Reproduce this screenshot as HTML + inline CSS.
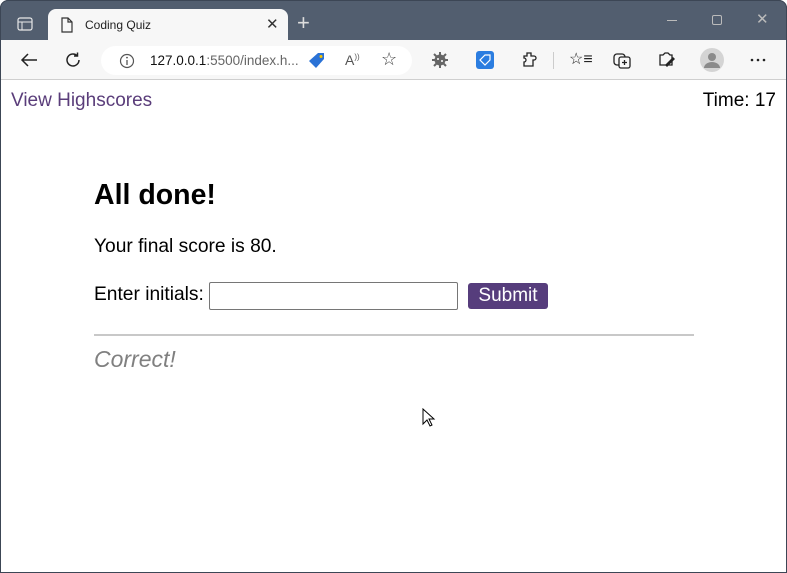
<!DOCTYPE html>
<html><head><meta charset="utf-8"><style>
*{margin:0;padding:0;box-sizing:border-box}
body{width:787px;height:573px;overflow:hidden;font-family:"Liberation Sans",Arial,sans-serif;background:#fff;position:relative}
.frame{position:absolute;inset:0;border:1px solid #3c4655;border-radius:8px 8px 0 0;pointer-events:none}
.title{position:absolute;left:0;top:0;width:787px;height:41px;background:#525e6f;border-radius:8px 8px 0 0}
.tab{position:absolute;left:48px;top:9px;width:240px;height:32px;background:#f7f7f7;border-radius:8px 8px 0 0;font-size:12px;color:#222}
.toolbar{position:absolute;left:0;top:40px;width:787px;height:40px;background:#f7f7f7;border-bottom:1px solid #cfcfcf}
.url{position:absolute;left:101px;top:6px;width:311px;height:29px;background:#fff;border-radius:15px;font-size:13px}
.ic{position:absolute}
.page{position:absolute;top:80px;left:0;width:787px}
</style></head><body>
<div class="title">
 <svg class="ic" style="left:17px;top:17px" width="16" height="14"><rect x="1" y="1" width="14" height="12" rx="2" fill="none" stroke="#e8e8e8" stroke-width="1.2"/><line x1="1" y1="5" x2="15" y2="5" stroke="#e8e8e8"/><line x1="5" y1="5" x2="5" y2="13" stroke="#e8e8e8"/></svg>
 <div class="tab">
  <svg class="ic" style="left:12px;top:8px" width="14" height="16"><path d="M2 1h6l4 4v10H2z M8 1v4h4" fill="none" stroke="#333" stroke-width="1.2"/></svg>
  <span style="position:absolute;left:37px;top:9px">Coding Quiz</span>
  <span style="position:absolute;left:218px;top:6px;font-size:15px;color:#333">✕</span>
 </div>
 <span style="position:absolute;left:297px;top:10px;color:#ddd;font-size:22px;font-weight:300">+</span>
 <div style="position:absolute;left:667px;top:20px;width:10px;height:1px;background:#bbb"></div>
 <div style="position:absolute;left:712px;top:15px;width:10px;height:10px;border:1px solid #bbb;border-radius:2px"></div>
 <span style="position:absolute;left:756px;top:10px;color:#bbb;font-size:15px">✕</span>
</div>
<div class="toolbar">
 <svg class="ic" style="left:20px;top:12px" width="18" height="16"><path d="M17 8H2M8 2L2 8l6 6" fill="none" stroke="#222" stroke-width="1.5"/></svg>
 <svg class="ic" style="left:64px;top:11px" width="18" height="18"><path d="M15 9a6 6 0 1 1-2-4.5M13.5 1.5v3.5h-3.5" fill="none" stroke="#222" stroke-width="1.5"/></svg>
 <div class="url">
  <svg class="ic" style="left:18px;top:7px" width="16" height="16"><circle cx="8" cy="8" r="6.5" fill="none" stroke="#555" stroke-width="1.2"/><line x1="8" y1="7" x2="8" y2="12" stroke="#555" stroke-width="1.3"/><circle cx="8" cy="4.6" r=".9" fill="#555"/></svg>
  <span style="position:absolute;left:49px;top:7px;color:#111;font-size:13.5px">127.0.0.1<span style="color:#666">:5500/index.h...</span></span>
  <svg class="ic" style="left:207px;top:6px" width="18" height="18"><path d="M10 1h6v6l-8 9-7-7z" fill="#2a72d6"/><circle cx="13" cy="4.5" r="1.5" fill="#f5c400"/></svg>
  <span style="position:absolute;left:244px;top:6px;font-size:14px;color:#555">A<sup style="font-size:8px">))</sup></span>
  <span style="position:absolute;left:280px;top:3px;font-size:18px;color:#444">☆</span>
 </div>
 <svg class="ic" style="left:432px;top:12px" width="16" height="16"><circle cx="8" cy="8" r="5.5" fill="#666"/><g stroke="#666" stroke-width="2"><line x1="8" y1="0" x2="8" y2="16"/><line x1="0" y1="8" x2="16" y2="8"/><line x1="2" y1="2" x2="14" y2="14"/><line x1="14" y1="2" x2="2" y2="14"/></g><circle cx="6" cy="7" r="1" fill="#fff"/><circle cx="10" cy="9" r="1" fill="#fff"/></svg>
 <svg class="ic" style="left:476px;top:11px" width="18" height="18"><rect width="18" height="18" rx="3" fill="#2b7de0"/><path d="M9 4h5v5l-5 5-5-5z" fill="none" stroke="#fff" stroke-width="1.2"/></svg>
 <svg class="ic" style="left:520px;top:11px" width="18" height="18"><path d="M7 2h4v3h3a2 2 0 0 1 0 4v0h-1v6H4v-4a2 2 0 0 0 0-4V5h3z" fill="none" stroke="#222" stroke-width="1.3"/></svg>
 <div style="position:absolute;left:553px;top:12px;width:1px;height:17px;background:#ccc"></div>
 <span style="position:absolute;left:569px;top:9px;font-size:16px;color:#222">☆≡</span>
 <svg class="ic" style="left:613px;top:11px" width="18" height="18"><rect x="1" y="3" width="11" height="11" rx="3" fill="none" stroke="#222" stroke-width="1.3"/><rect x="6" y="6" width="11" height="11" rx="2" fill="#f7f7f7" stroke="#222" stroke-width="1.3"/><path d="M11.5 9v5M9 11.5h5" stroke="#222" stroke-width="1.3"/></svg>
 <svg class="ic" style="left:657px;top:11px" width="18" height="18"><path d="M3 4h3l2-2h3l2 2h2v10H3z" fill="none" stroke="#222" stroke-width="1.3"/><path d="M8 14l8-8 2 2-8 8z" fill="#222"/></svg>
 <svg class="ic" style="left:700px;top:8px" width="24" height="24"><circle cx="12" cy="12" r="12" fill="#d4d4d4"/><circle cx="12" cy="9" r="4" fill="#8a8a8a"/><path d="M4 20a8 6 0 0 1 16 0" fill="#8a8a8a"/></svg>
 <svg class="ic" style="left:750px;top:18px" width="16" height="4"><circle cx="2" cy="2" r="1.3" fill="#222"/><circle cx="8" cy="2" r="1.3" fill="#222"/><circle cx="14" cy="2" r="1.3" fill="#222"/></svg>
</div>
<div class="page">
 <div style="position:absolute;left:11px;top:10px;font-size:19px;color:#5a3d7a">View Highscores</div>
 <div style="position:absolute;right:11px;top:10px;font-size:19px;color:#000">Time: 17</div>
 <div style="position:absolute;left:94px;top:99px;font-size:28.5px;font-weight:bold">All done!</div>
 <div style="position:absolute;left:94px;top:156px;font-size:19.2px">Your final score is 80.</div>
 <div style="position:absolute;left:94px;top:204px;font-size:19.2px">Enter initials:</div>
 <div style="position:absolute;left:209px;top:202px;width:249px;height:28px;border:1px solid #767676;border-radius:2px"></div>
 <div style="position:absolute;left:468px;top:203px;width:80px;height:26px;background:#563d7c;border-radius:3px;color:#fff;font-size:19px;text-align:center;line-height:26px">Submit</div>
 <div style="position:absolute;left:94px;top:254px;width:600px;height:2px;background:#c8c8c8"></div>
 <div style="position:absolute;left:94px;top:266px;font-size:23px;font-style:italic;color:#808080">Correct!</div>
 <svg class="ic" style="left:422px;top:328px" width="14" height="20"><path d="M1 1v15l4-4 3 6 2-1-3-6h5z" fill="#fff" stroke="#000"/></svg>
</div>
<div class="frame"></div>
</body></html>
